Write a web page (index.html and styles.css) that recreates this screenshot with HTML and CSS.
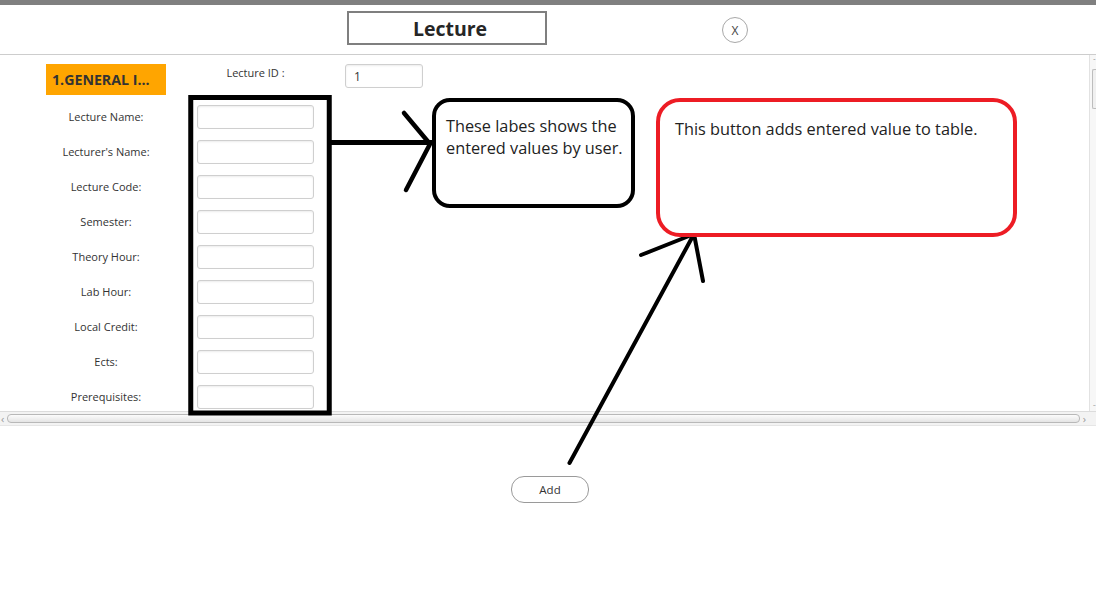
FILE: index.html
```html
<!DOCTYPE html>
<html lang="en">
<head>
<meta charset="utf-8">
<title>Lecture</title>
<link rel="stylesheet" href="styles.css">
</head>
<body>
<div class="topbar"></div>
<header class="header">
  <div class="title">Lecture</div>
  <button class="close">X</button>
</header>
<div class="scroller">
  <div class="viewport">
    <div class="form">
      <div class="badge">1.GENERAL I...</div>
      <div class="id-label">Lecture ID :</div>
      <input class="field" value="1">

      <label class="lbl">Lecture Name:</label><input class="field"><span></span>
      <label class="lbl">Lecturer's Name:</label><input class="field"><span></span>
      <label class="lbl">Lecture Code:</label><input class="field"><span></span>
      <label class="lbl">Semester:</label><input class="field"><span></span>
      <label class="lbl">Theory Hour:</label><input class="field"><span></span>
      <label class="lbl">Lab Hour:</label><input class="field"><span></span>
      <label class="lbl">Local Credit:</label><input class="field"><span></span>
      <label class="lbl">Ects:</label><input class="field"><span></span>
      <label class="lbl">Prerequisites:</label><input class="field"><span></span>
    </div>
  </div>
  <div class="vscroll">
    <span class="v-up">&#710;</span>
    <span class="v-thumb"></span>
    <span class="v-down">&#711;</span>
  </div>
</div>
<div class="hscroll">
  <span class="h-arrow">&#8249;</span>
  <span class="h-track"></span>
  <span class="h-arrow">&#8250;</span>
</div>
<div class="actions">
  <button class="add">Add</button>
</div>

<svg class="annotations" width="1096" height="604" viewBox="0 0 1096 604">
  <rect x="190.75" y="97.5" width="138.5" height="315.5" fill="none" stroke="#000" stroke-width="5"/>
  <line x1="331" y1="142.5" x2="432" y2="142.5" stroke="#000" stroke-width="5"/>
  <polyline points="404,113 430,144 406,190" fill="none" stroke="#000" stroke-width="4.5" stroke-linecap="round" stroke-linejoin="round"/>
  <line x1="569.5" y1="463" x2="694" y2="234" stroke="#000" stroke-width="4" stroke-linecap="round"/>
  <polyline points="641,255 694,234 703,281" fill="none" stroke="#000" stroke-width="4" stroke-linecap="round" stroke-linejoin="round"/>
</svg>
<div class="note note-black">These labes shows the<br>entered values by user.</div>
<div class="note note-red">This button adds entered value to table.</div>
</body>
</html>
```
FILE: styles.css
```css
body {
  margin: 0;
  width: 1096px;
  height: 604px;
  overflow: hidden;
  position: relative;
  background: #fff;
  font-family: "Open Sans", "Noto Sans", sans-serif;
  color: #333;
}

.topbar {
  height: 5px;
  background: #808080;
}

.header {
  box-sizing: border-box;
  height: 50px;
  border-bottom: 1px solid #cdcdcd;
  display: flex;
  align-items: flex-start;
  padding-left: 347px;
}

.title {
  margin-top: 6px;
  box-sizing: border-box;
  width: 200px;
  height: 34px;
  border: 2px solid #7f7f7f;
  display: flex;
  align-items: center;
  justify-content: center;
  padding-left: 6px;
  font-weight: 700;
  font-size: 19.5px;
  color: #262626;
}

.close {
  margin-left: 175px;
  margin-top: 12px;
  width: 26px;
  height: 26px;
  padding: 0;
  border-radius: 50%;
  border: 1px solid #a8a8a8;
  background: #fff;
  font-family: "Open Sans", sans-serif;
  font-size: 12px;
  color: #444;
}

.scroller {
  display: flex;
  height: 356px;
}

.viewport {
  flex: 1;
  overflow: hidden;
}

.form {
  display: grid;
  grid-template-columns: 120px 117px 78px;
  grid-template-rows: 30px;
  grid-auto-rows: 24px;
  column-gap: 31px;
  row-gap: 11px;
  padding: 9px 0 0 46px;
}

.badge {
  height: 31px;
  background: #ffa500;
  color: #333;
  font-weight: 700;
  font-size: 14.2px;
  line-height: 31px;
  padding-left: 6px;
  white-space: nowrap;
}

.id-label {
  font-size: 11px;
  text-align: center;
  padding-top: 1px;
  line-height: 16px;
}

.lbl {
  font-size: 11px;
  text-align: center;
  align-self: center;
  white-space: nowrap;
  margin-top: -2px;
}

.field {
  box-sizing: border-box;
  width: 100%;
  height: 24px;
  margin: 0;
  border: 1px solid #cfcfcf;
  border-radius: 3px;
  background: #fff;
  box-shadow: inset 0 1px 2px rgba(0, 0, 0, 0.08);
  padding: 0 8px;
  font-family: "Open Sans", sans-serif;
  font-size: 12px;
  color: #333;
}

.vscroll {
  width: 6px;
  border-left: 1px solid #e2e2e2;
  display: flex;
  flex-direction: column;
  align-items: flex-end;
  background: #f7f7f7;
}

.v-up, .v-down {
  font-size: 8px;
  line-height: 8px;
  color: #999;
  height: 8px;
}

.v-up { margin-top: 2px; }

.v-thumb {
  box-sizing: border-box;
  width: 4px;
  height: 40px;
  margin-top: 4px;
  border: 1px solid #bdbdbd;
  border-right: none;
  border-radius: 2px 0 0 2px;
  background: #f0f0f0;
}

.v-down { margin-top: auto; }

.hscroll {
  box-sizing: border-box;
  height: 15px;
  display: flex;
  align-items: center;
  gap: 3px;
  padding: 0 10px 0 1px;
  background: #f3f3f3;
  border-top: 1px solid #dcdcdc;
  border-bottom: 1px solid #e6e6e6;
}

.h-arrow {
  font-size: 11px;
  line-height: 11px;
  color: #999;
}

.h-track {
  flex: 1;
  box-sizing: border-box;
  height: 9px;
  border: 1px solid #b8b8b8;
  border-radius: 4px;
  background: linear-gradient(#fcfcfc, #e4e4e4);
}

.actions {
  display: flex;
  justify-content: center;
  padding: 50px 0 0 4px;
}

.add {
  box-sizing: border-box;
  width: 78px;
  height: 27px;
  border: 1px solid #9a9a9a;
  border-radius: 13px;
  background: #fff;
  font-family: "Open Sans", sans-serif;
  font-size: 11.5px;
  color: #333;
  padding: 0;
}

.annotations {
  position: absolute;
  left: 0;
  top: 0;
  pointer-events: none;
}

.note {
  position: absolute;
  box-sizing: border-box;
  background: #fff;
  font-family: "Open Sans", sans-serif;
  font-size: 16.3px;
  line-height: 22px;
  color: #222;
}

.note-black {
  left: 432px;
  top: 98px;
  width: 203px;
  height: 110px;
  border: 4px solid #000;
  border-radius: 18px;
  padding: 13px 0 0 10px;
}

.note-red {
  left: 656px;
  top: 98px;
  width: 361px;
  height: 139px;
  border: 4px solid #ed1c24;
  border-radius: 24px;
  padding: 16px 0 0 15px;
}
```
